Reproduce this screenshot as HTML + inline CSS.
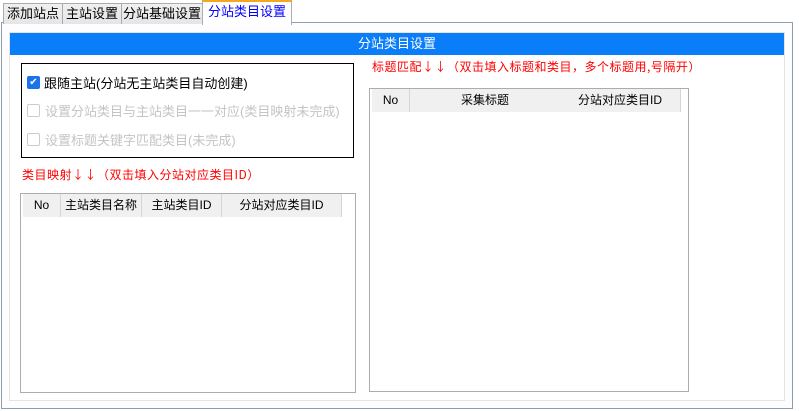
<!DOCTYPE html><html><head><style>
body{margin:0;width:799px;height:411px;background:#fff;font-family:"Liberation Sans","Noto Sans CJK SC",sans-serif;font-size:12px;position:relative;overflow:hidden}
.a{position:absolute;box-sizing:border-box}
.tab{position:absolute;top:3px;height:20px;border:1px solid #acacac;border-bottom:none;background:linear-gradient(#f0f0f0,#e5e5e5);line-height:19px;text-align:center;font-size:13px;color:#000}
.hd{position:absolute;top:0;height:23px;background:#f0f0f0;border-right:1px solid #d5d5d5;line-height:22px;text-align:center;color:#000}
.red{color:#f00;font-size:12px;font-family:"Noto Sans CJK SC",sans-serif;letter-spacing:0.5px;white-space:nowrap}
.cb{position:absolute;width:13px;height:13px;box-sizing:border-box;border:1px solid #ccc;border-radius:2px;background:#fff}
</style></head><body>
<div class="a" style="left:1px;top:22px;width:792px;height:387px;border:1px solid #8d9eaf;background:#fdfdff"></div>
<div class="tab" style="left:3px;width:58px">添加站点</div>
<div class="tab" style="left:62px;width:58px">主站设置</div>
<div class="tab" style="left:121px;width:80px">分站基础设置</div>
<div class="tab" style="left:202px;top:0;height:23px;width:88px;background:#fff;border-top:2px solid #f5a623;color:#0000ff;line-height:20px">分站类目设置</div>
<div class="a" style="left:9px;top:32px;width:776px;height:369px;border:1px solid #e4e4e4;background:#fff"></div>
<div class="a" style="left:10px;top:33px;width:774px;height:22px;background:#0a7df8;color:#fff;text-align:center;line-height:22px;font-size:13px">分站类目设置</div>
<div class="a" style="left:21px;top:63px;width:333px;height:95px;border:1px solid #000"></div>
<div class="cb" style="left:27px;top:76px;background:#1a73e8;border-color:#1a73e8;color:#fff;font-size:10px;line-height:11px;text-align:center">✔</div>
<div class="a" style="left:44px;top:73px;font-size:13px">跟随主站(分站无主站类目自动创建)</div>
<div class="cb" style="left:27px;top:104px"></div>
<div class="a" style="left:45px;top:101px;font-size:13px;color:#c4c4c4">设置分站类目与主站类目一一对应(类目映射未完成)</div>
<div class="cb" style="left:27px;top:133px"></div>
<div class="a" style="left:45px;top:130px;font-size:13px;color:#c4c4c4">设置标题关键字匹配类目(未完成)</div>
<div class="a red" style="left:22px;top:166px">类目映射↓↓（双击填入分站对应类目ID）</div>
<div class="a red" style="left:372px;top:58px">标题匹配↓↓（双击填入标题和类目，多个标题用,号隔开）</div>
<div class="a" style="left:20px;top:193px;width:336px;height:200px;border:1px solid #acacac;background:#fff">
<div class="hd" style="left:2px;width:37px">No</div>
<div class="hd" style="left:40px;width:80px">主站类目名称</div>
<div class="hd" style="left:121px;width:79px">主站类目ID</div>
<div class="hd" style="left:201px;width:119px">分站对应类目ID</div>
</div>
<div class="a" style="left:369px;top:88px;width:320px;height:304px;border:1px solid #acacac;background:#fff">
<div class="hd" style="left:2px;width:37px">No</div>
<div class="hd" style="left:40px;width:150px">采集标题</div>
<div class="hd" style="left:190px;width:120px">分站对应类目ID</div>
</div>
</body></html>
